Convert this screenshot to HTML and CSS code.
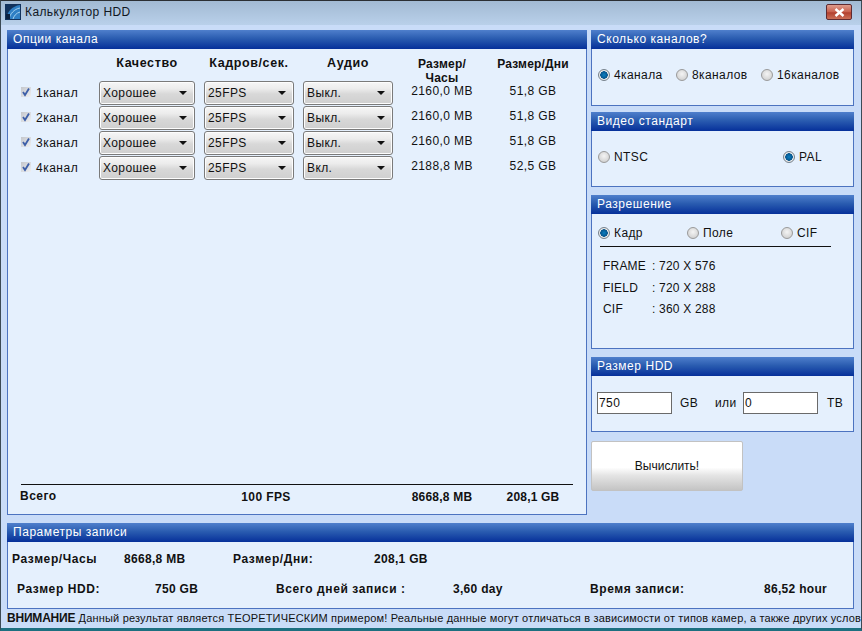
FILE: index.html
```html
<!DOCTYPE html>
<html lang="ru">

<head>
  <meta charset="UTF-8">
  <title>Калькулятор HDD</title>
  <link rel="stylesheet" href="styles.css">
</head>

<body>
  <div class="window">
    <div class="titlebar">
      <svg class="app-icon" xmlns="http://www.w3.org/2000/svg" width="16" height="16" viewBox="0 0 16 16">
        <rect width="16" height="16" fill="#12325c" />
        <path d="M1 15C2 8 7 2 15 1V15Z" fill="#2f7fc4" />
        <path d="M4 15C5 10 9 5 15 4M8 15C9 12 11 9 15 8" stroke="#a4d2f0" stroke-width="1" fill="none" />
        <rect x="1" y="10" width="4" height="5" fill="#0b2140" />
      </svg>
      <span class="title-text">Калькулятор HDD</span>
      <span class="close-btn">
        <svg xmlns="http://www.w3.org/2000/svg" width="11" height="9" viewBox="0 0 11 9">
          <path d="M1.5 1L9.5 8M9.5 1L1.5 8" stroke="#fff" stroke-width="2.4" />
        </svg>
      </span>
    </div>

    <div class="content">
      <div class="top-area">
        <section class="panel channels">
          <h2 class="panel-title">Опции канала</h2>
          <div class="panel-body channels-body">
            <div class="channel-grid">
              <span></span>
              <span class="col-head">Качество</span>
              <span class="col-head">Кадров/сек.</span>
              <span class="col-head">Аудио</span>
              <span class="col-head size-head">Размер/Часы</span>
              <span class="col-head size-head">Размер/Дни</span>

              <label class="channel"><span class="check"><svg xmlns="http://www.w3.org/2000/svg" width="10" height="10" viewBox="0 0 10 10"><path d="M2 5L4 8L8 1.5" stroke="#3d5fa8" stroke-width="1.8" fill="none" /></svg></span>1канал</label>
              <div class="combo"><span>Хорошее</span><i class="caret"></i></div>
              <div class="combo"><span>25FPS</span><i class="caret"></i></div>
              <div class="combo"><span>Выкл.</span><i class="caret"></i></div>
              <span class="size-val">2160,0 MB</span>
              <span class="size-val">51,8 GB</span>

              <label class="channel"><span class="check"><svg xmlns="http://www.w3.org/2000/svg" width="10" height="10" viewBox="0 0 10 10"><path d="M2 5L4 8L8 1.5" stroke="#3d5fa8" stroke-width="1.8" fill="none" /></svg></span>2канал</label>
              <div class="combo"><span>Хорошее</span><i class="caret"></i></div>
              <div class="combo"><span>25FPS</span><i class="caret"></i></div>
              <div class="combo"><span>Выкл.</span><i class="caret"></i></div>
              <span class="size-val">2160,0 MB</span>
              <span class="size-val">51,8 GB</span>

              <label class="channel"><span class="check"><svg xmlns="http://www.w3.org/2000/svg" width="10" height="10" viewBox="0 0 10 10"><path d="M2 5L4 8L8 1.5" stroke="#3d5fa8" stroke-width="1.8" fill="none" /></svg></span>3канал</label>
              <div class="combo"><span>Хорошее</span><i class="caret"></i></div>
              <div class="combo"><span>25FPS</span><i class="caret"></i></div>
              <div class="combo"><span>Выкл.</span><i class="caret"></i></div>
              <span class="size-val">2160,0 MB</span>
              <span class="size-val">51,8 GB</span>

              <label class="channel"><span class="check"><svg xmlns="http://www.w3.org/2000/svg" width="10" height="10" viewBox="0 0 10 10"><path d="M2 5L4 8L8 1.5" stroke="#3d5fa8" stroke-width="1.8" fill="none" /></svg></span>4канал</label>
              <div class="combo"><span>Хорошее</span><i class="caret"></i></div>
              <div class="combo"><span>25FPS</span><i class="caret"></i></div>
              <div class="combo"><span>Вкл.</span><i class="caret"></i></div>
              <span class="size-val">2188,8 MB</span>
              <span class="size-val">52,5 GB</span>
            </div>

            <div class="totals">
              <b class="total-name">Всего</b>
              <b class="total-fps">100 FPS</b>
              <b class="total-val">8668,8 MB</b>
              <b class="total-val">208,1 GB</b>
            </div>
          </div>
        </section>

        <div class="side">
          <section class="panel count-panel">
            <h2 class="panel-title">Сколько каналов?</h2>
            <div class="panel-body radio-row count-row">
              <label class="radio-item"><i class="radio on"></i>4канала</label>
              <label class="radio-item"><i class="radio"></i>8каналов</label>
              <label class="radio-item"><i class="radio"></i>16каналов</label>
            </div>
          </section>

          <section class="panel video-panel">
            <h2 class="panel-title">Видео стандарт</h2>
            <div class="panel-body radio-row video-row">
              <label class="radio-item"><i class="radio"></i>NTSC</label>
              <label class="radio-item"><i class="radio on"></i>PAL</label>
            </div>
          </section>

          <section class="panel res-panel">
            <h2 class="panel-title">Разрешение</h2>
            <div class="panel-body">
              <div class="radio-row res-row">
                <label class="radio-item"><i class="radio on"></i>Кадр</label>
                <label class="radio-item"><i class="radio"></i>Поле</label>
                <label class="radio-item"><i class="radio"></i>CIF</label>
              </div>
              <div class="res-list">
                <span>FRAME</span><span>: 720 X 576</span>
                <span>FIELD</span><span>: 720 X 288</span>
                <span>CIF</span><span>: 360 X 288</span>
              </div>
            </div>
          </section>

          <section class="panel hdd-panel">
            <h2 class="panel-title">Размер HDD</h2>
            <div class="panel-body hdd-row">
              <input class="hdd-input" type="text" value="750">
              <span class="unit-gb">GB</span>
              <span class="unit-or">или</span>
              <input class="hdd-input" type="text" value="0">
              <span class="unit-tb">TB</span>
            </div>
          </section>

          <button class="calc-btn">Вычислить!</button>
        </div>
      </div>

      <section class="panel record-panel">
        <h2 class="panel-title">Параметры записи</h2>
        <div class="panel-body record-body">
          <div class="record-row row-one">
            <b>Размер/Часы</b>
            <b class="value">8668,8 MB</b>
            <b>Размер/Дни:</b>
            <b class="value">208,1 GB</b>
          </div>
          <div class="record-row row-two">
            <b>Размер HDD:</b>
            <b class="value">750 GB</b>
            <b>Всего дней записи :</b>
            <b class="value">3,60 day</b>
            <b>Время записи:</b>
            <b class="value">86,52 hour</b>
          </div>
        </div>
      </section>

      <p class="notice"><b>ВНИМАНИЕ</b> Данный результат является ТЕОРЕТИЧЕСКИМ примером! Реальные данные могут отличаться в зависимости от типов камер, а также других условий!</p>
    </div>
  </div>
</body>

</html>
```

FILE: styles.css
```css
* {
  box-sizing: border-box;
}

body {
  margin: 0;
  font-family: "Liberation Sans", Arial, sans-serif;
  font-size: 12px;
  color: #111;
  background: #c9dcf8;
}

.window {
  width: 862px;
  height: 631px;
  display: flex;
  flex-direction: column;
  background: #c9dcf8;
  border: 1px solid #3c4a55;
  border-top-color: #2b2f33;
  border-bottom: 3px solid #1d6f80;
  overflow: hidden;
}

.titlebar {
  height: 24px;
  flex: none;
  display: flex;
  align-items: center;
  padding: 0 9px 2px 4px;
  background: linear-gradient(#a2bad3, #b9d0ea);
}

.app-icon {
  flex: none;
}

.title-text {
  margin-left: 4px;
  letter-spacing: 0.4px;
  color: #10171f;
}

.close-btn {
  margin-left: auto;
  width: 26px;
  height: 16px;
  display: flex;
  align-items: center;
  justify-content: center;
  border: 1px solid #5f2a30;
  border-radius: 2px;
  background: linear-gradient(#df9c8c, #c8604d 50%, #b2402f 55%, #cb6f58);
}

.content {
  flex: 1;
  display: flex;
  flex-direction: column;
  padding: 5px 7px 0 6px;
}

.top-area {
  display: flex;
  height: 485px;
  flex: none;
}

.panel {
  display: flex;
  flex-direction: column;
  background: #e5f0fd;
  border: 1px solid #4c73c0;
  border-top: 0;
}

.panel-title {
  margin: 0 -1px;
  height: 19px;
  flex: none;
  padding-left: 6px;
  font-size: 12px;
  font-weight: 400;
  line-height: 19px;
  letter-spacing: 0.55px;
  color: #fff;
  background: linear-gradient(#4f7fcc, #2a5cb0 45%, #06309a);
}

.panel-body {
  flex: 1;
}

/* channel options */
.channels {
  width: 580px;
  flex: none;
}

.channels-body {
  display: flex;
  flex-direction: column;
  padding: 6px 13px 0 13px;
}

.channel-grid,
.totals {
  display: grid;
  grid-template-columns: 69px 96px 90px 90px 80px 84px;
  column-gap: 9px;
}

.channel-grid {
  grid-auto-rows: 25px;
  align-items: center;
}

.col-head {
  text-align: center;
  font-weight: 700;
  font-size: 12.5px;
  letter-spacing: 0.6px;
  align-self: start;
  padding-top: 1px;
}

.size-head {
  font-size: 12px;
  letter-spacing: 0.2px;
  padding-top: 2px;
}

.channel {
  display: flex;
  align-items: center;
  gap: 5px;
  letter-spacing: 0.5px;
  padding-top: 1px;
}

.check {
  width: 10px;
  height: 10px;
  display: block;
  margin-top: -3px;
  background: linear-gradient(135deg, #c4c6cb, #eef0f3);
}

.check svg {
  display: block;
}

.combo {
  height: 24px;
  display: flex;
  align-items: center;
  justify-content: space-between;
  padding: 0 7px 0 3px;
  border: 1px solid #7a7a7a;
  border-radius: 3px;
  letter-spacing: 0.4px;
  background: linear-gradient(#f6f6f6, #ececec 30%, #d8d8d8 55%, #cfcfcf);
  box-shadow: inset 0 0 0 1px #fdfdfd;
}

.caret {
  width: 0;
  height: 0;
  border-left: 4px solid transparent;
  border-right: 4px solid transparent;
  border-top: 4px solid #111;
}

.size-val {
  text-align: center;
  letter-spacing: 0.4px;
  padding-bottom: 4px;
}

.totals {
  margin-top: auto;
  margin-bottom: 8px;
  padding-top: 3px;
  border-top: 1px solid #111;
  align-items: center;
  height: 22px;
  line-height: 16px;
}

.total-name {
  margin-left: -1px;
  letter-spacing: 0.5px;
  margin-top: -3px;
}

.total-fps {
  grid-column: 2 / 5;
  padding-left: 40px;
  text-align: center;
  letter-spacing: 0.4px;
}

.total-val {
  text-align: center;
  letter-spacing: 0.2px;
}

/* right column */
.side {
  flex: 1;
  margin-left: 4px;
  display: flex;
  flex-direction: column;
}

.count-panel {
  height: 76px;
}

.video-panel {
  height: 75px;
  margin-top: 6px;
}

.res-panel {
  height: 154px;
  margin-top: 8px;
}

.hdd-panel {
  height: 75px;
  margin-top: 8px;
}

.radio-row {
  display: flex;
  align-items: center;
}

.radio-item {
  display: flex;
  align-items: center;
  gap: 4px;
  letter-spacing: 0.4px;
}

.radio {
  width: 12px;
  height: 12px;
  border-radius: 50%;
  flex: none;
  border: 1px solid #9a9a9a;
  background: radial-gradient(circle at 50% 40%, #f4f4f4, #c8c8c8);
}

.radio.on {
  border-color: #77828c;
  background: radial-gradient(circle, #0a7fc2 0, #06548c 3.5px, #f2f2f2 4px, #c4c4c4 100%);
}

.count-row {
  padding: 0 0 4px 6px;
}

.count-row .radio-item:nth-child(1) {
  width: 78px;
}

.count-row .radio-item:nth-child(2) {
  width: 85px;
}

.video-row {
  justify-content: space-between;
  padding: 0 31px 3px 6px;
}

.res-row {
  height: 22px;
  margin: 10px 22px 0 6px;
  padding-bottom: 4px;
}

.res-row .radio-item:nth-child(1) {
  width: 89px;
}

.res-row .radio-item:nth-child(2) {
  width: 94px;
}

.res-list {
  margin: 0 22px 0 8px;
  padding: 12px 0 0 3px;
  border-top: 1px solid #111;
  display: grid;
  grid-template-columns: 49px 1fr;
  grid-auto-rows: 21.5px;
  letter-spacing: 0.2px;
}

.hdd-row {
  display: flex;
  align-items: center;
  padding: 0 0 2px 5px;
}

.hdd-input {
  width: 75px;
  height: 22px;
  padding: 0 1px;
  border: 1px solid #6a6a6a;
  background: #fff;
  font: 12px "Liberation Sans", Arial, sans-serif;
  letter-spacing: 0.4px;
  color: #111;
}

.unit-gb {
  margin-left: 8px;
  width: 35px;
  letter-spacing: 0.4px;
}

.unit-or {
  width: 28px;
  letter-spacing: 0.4px;
}

.unit-tb {
  margin-left: 9px;
  letter-spacing: 0.4px;
}

.calc-btn {
  width: 152px;
  height: 50px;
  margin-top: 9px;
  padding: 0;
  border: 1px solid #c2c2c2;
  border-radius: 2px;
  font: 12px "Liberation Sans", Arial, sans-serif;
  color: #111;
  background: linear-gradient(#fff, #fff 53%, #e4e4e4 70%, #c4c4c4);
}

/* recording parameters */
.record-panel {
  height: 86px;
  flex: none;
  margin-top: 8px;
}

.record-body {
  position: relative;
}

.record-row {
  display: grid;
  height: 32px;
  align-items: center;
  letter-spacing: 0.6px;
}

.record-row .value {
  letter-spacing: 0.3px;
}

.row-one {
  height: 28px;
  margin-top: 3px;
  grid-template-columns: 112px auto 109px auto;
  justify-content: start;
  padding-left: 4px;
}

.row-one b:nth-child(3) {
  grid-column: 3;
  white-space: nowrap;
}

.row-one .value:nth-child(2) {
  width: 109px;
}

.row-one .value:nth-child(4) {
  margin-left: 32px;
}

.row-two {
  grid-template-columns: 138px 121px 177px 137px 174px auto;
  justify-content: start;
  padding-left: 9px;
}

.notice {
  margin: 0;
  padding: 2px 0 0 0;
  line-height: 14px;
  font-size: 11px;
  letter-spacing: 0.18px;
  white-space: nowrap;
}

.notice b {
  font-size: 12px;
  letter-spacing: -0.2px;
}
```
